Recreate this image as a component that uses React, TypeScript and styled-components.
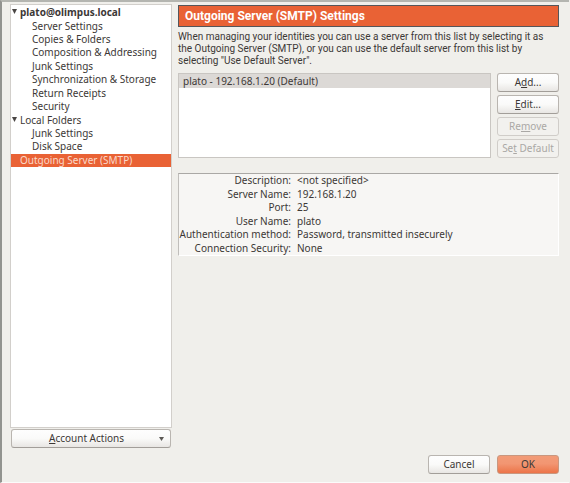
import React, { useState } from "react";
import styled, { createGlobalStyle, css } from "styled-components";

const GlobalStyle = createGlobalStyle`
  * { box-sizing: border-box; }
  body {
    margin: 0;
    background: #f0efeb;
    color: #3c3836;
    font: 10px/13px "Noto Sans", "Open Sans", sans-serif;
  }
  button { font: inherit; color: inherit; }
`;

const Dialog = styled.main`
  display: flex;
  flex-direction: column;
  min-height: 100vh;
  margin-right: 1px;
  padding: 2px 10px 8px 8px;
  border-top: 2px solid #b4b5b0;
  border-left: 2px solid #92938f;
  border-bottom: 1px solid #fbfbfa;
`;

const Columns = styled.div`
  display: grid;
  grid-template-columns: 162px minmax(0, 1fr);
  column-gap: 6px;
  flex: 1;
`;

const Sidebar = styled.nav`
  display: flex;
  flex-direction: column;
`;

const TreePane = styled.div`
  flex: 1;
  padding-top: 1px;
  background: #fff;
  border: 1px solid #d2cfcb;
`;

const Tree = styled.ul`
  display: grid;
  grid-auto-rows: 1fr;
  height: 161px;
  margin: 0;
  padding: 0;
  list-style: none;
`;

const TreeRow = styled.li<{ $child?: boolean; $bold?: boolean; $selected?: boolean }>`
  display: flex;
  align-items: center;
  padding-left: ${(p) => (p.$child ? 21 : 1)}px;
  font-weight: ${(p) => (p.$bold ? 700 : 400)};
  white-space: nowrap;
  cursor: default;
  ${(p) => p.$selected && css`
    background: #e96235;
    color: #fbd9ca;
  `}
`;

const Twisty = styled.svg`
  width: 5px;
  height: 5px;
  margin-right: 3px;
  margin-bottom: 2px;
`;

const TwistySpace = styled.span`
  width: 8px;
`;

const PushButton = styled.button<{ $primary?: boolean }>`
  min-width: 62px;
  height: 19px;
  padding: 0 2px;
  border: 1px solid #b9b5b0;
  border-bottom-color: #a29e99;
  border-radius: 3px;
  background: linear-gradient(#fefefe, #fafaf9 50%, #e8e6e3);
  line-height: 15px;
  white-space: nowrap;
  &:disabled {
    color: #aaa8a5;
    border-color: #d0cdc9;
    background: #f2f1ee;
  }
  ${(p) => p.$primary && css`
    border-color: #c9977f;
    background: linear-gradient(#f29b77, #f29672 45%, #ec7448);
  `}
`;

const MenuButton = styled(PushButton)`
  display: flex;
  align-items: center;
  margin: 1px 1px 0 1px;
  padding-right: 6px;
  span { flex: 1; }
`;

const Content = styled.section`
  display: flex;
  flex-direction: column;
  padding-top: 1px;
`;

const Title = styled.h1`
  margin: 0 0 4px;
  padding: 2px 6px;
  border: 1px solid #55565a;
  background: #e96235;
  color: #fff;
  font-family: Roboto, sans-serif;
  font-size: 12px;
  line-height: 16px;
`;

const Intro = styled.p`
  margin: 0 0 6px;
  font-family: Roboto, sans-serif;
  line-height: 12px;
`;

const ServerArea = styled.div`
  display: grid;
  grid-template-columns: minmax(0, 1fr) 62px;
  column-gap: 6px;
`;

const ServerList = styled.ul`
  margin: 0;
  padding: 0;
  list-style: none;
  background: #fff;
  border: 1px solid #c9c6c2;
`;

const ServerRow = styled.li`
  padding: 0 4px;
  background: #dcd9d6;
  line-height: 14px;
`;

const ButtonStack = styled.div`
  display: flex;
  flex-direction: column;
  gap: 3px;
`;

const Details = styled.dl`
  display: grid;
  grid-template-columns: 112px minmax(0, 1fr);
  grid-auto-rows: 1fr;
  align-items: center;
  column-gap: 6px;
  height: 83px;
  margin: 15px 0 0;
  padding: 0;
  border: 1px solid #fff;
  border-top-color: #aaa8a5;
  border-left-color: #c0bebb;
  background: #f7f6f4;
  dt { text-align: right; white-space: nowrap; }
  dd { margin: 0; }
`;

const Footer = styled.footer`
  display: flex;
  justify-content: flex-end;
  gap: 7px;
  padding: 7px 0 0;
`;

const Arrow = () => (
  <Twisty viewBox="0 0 5 5" aria-hidden="true">
    <path d="M0 0h5L2.5 5z" fill="#4a4644" />
  </Twisty>
);

type Node = { label: string; child?: boolean; open?: boolean; bold?: boolean };

const nodes: Node[] = [
  { label: "plato@olimpus.local", open: true, bold: true },
  { label: "Server Settings", child: true },
  { label: "Copies & Folders", child: true },
  { label: "Composition & Addressing", child: true },
  { label: "Junk Settings", child: true },
  { label: "Synchronization & Storage", child: true },
  { label: "Return Receipts", child: true },
  { label: "Security", child: true },
  { label: "Local Folders", open: true },
  { label: "Junk Settings", child: true },
  { label: "Disk Space", child: true },
  { label: "Outgoing Server (SMTP)" },
];

const details = [
  ["Description:", "<not specified>"],
  ["Server Name:", "192.168.1.20"],
  ["Port:", "25"],
  ["User Name:", "plato"],
  ["Authentication method:", "Password, transmitted insecurely"],
  ["Connection Security:", "None"],
];

export default function App() {
  const [selected, setSelected] = useState(nodes.length - 1);
  return (
    <>
      <GlobalStyle />
      <Dialog>
        <Columns>
          <Sidebar aria-label="Accounts">
            <TreePane>
              <Tree role="tree">
                {nodes.map((n, i) => (
                  <TreeRow
                    key={i}
                    role="treeitem"
                    aria-level={n.child ? 2 : 1}
                    aria-expanded={n.open}
                    aria-selected={i === selected}
                    $child={n.child}
                    $bold={n.bold}
                    $selected={i === selected}
                    onClick={() => setSelected(i)}
                  >
                    {n.open ? <Arrow /> : !n.child && <TwistySpace />}
                    {n.label}
                  </TreeRow>
                ))}
              </Tree>
            </TreePane>
            <MenuButton type="button" aria-haspopup="menu">
              <span><u>A</u>ccount Actions</span>
              <svg width="5" height="4" viewBox="0 0 5 4" aria-hidden="true">
                <path d="M0 0h5L2.5 4z" fill="#5b5855" />
              </svg>
            </MenuButton>
          </Sidebar>
          <Content>
            <Title>Outgoing Server (SMTP) Settings</Title>
            <Intro>
              When managing your identities you can use a server from this list by selecting it as
              the Outgoing Server (SMTP), or you can use the default server from this list by
              selecting "Use Default Server".
            </Intro>
            <ServerArea>
              <ServerList role="listbox" aria-label="Outgoing servers">
                <ServerRow role="option" aria-selected="true">plato - 192.168.1.20 (Default)</ServerRow>
              </ServerList>
              <ButtonStack>
                <PushButton type="button">A<u>d</u>d...</PushButton>
                <PushButton type="button"><u>E</u>dit...</PushButton>
                <PushButton type="button" disabled>Re<u>m</u>ove</PushButton>
                <PushButton type="button" disabled>Se<u>t</u> Default</PushButton>
              </ButtonStack>
            </ServerArea>
            <Details>
              {details.map(([term, value]) => (
                <React.Fragment key={term}>
                  <dt>{term}</dt>
                  <dd>{value}</dd>
                </React.Fragment>
              ))}
            </Details>
          </Content>
        </Columns>
        <Footer>
          <PushButton type="button">Cancel</PushButton>
          <PushButton type="submit" $primary>OK</PushButton>
        </Footer>
      </Dialog>
    </>
  );
}
